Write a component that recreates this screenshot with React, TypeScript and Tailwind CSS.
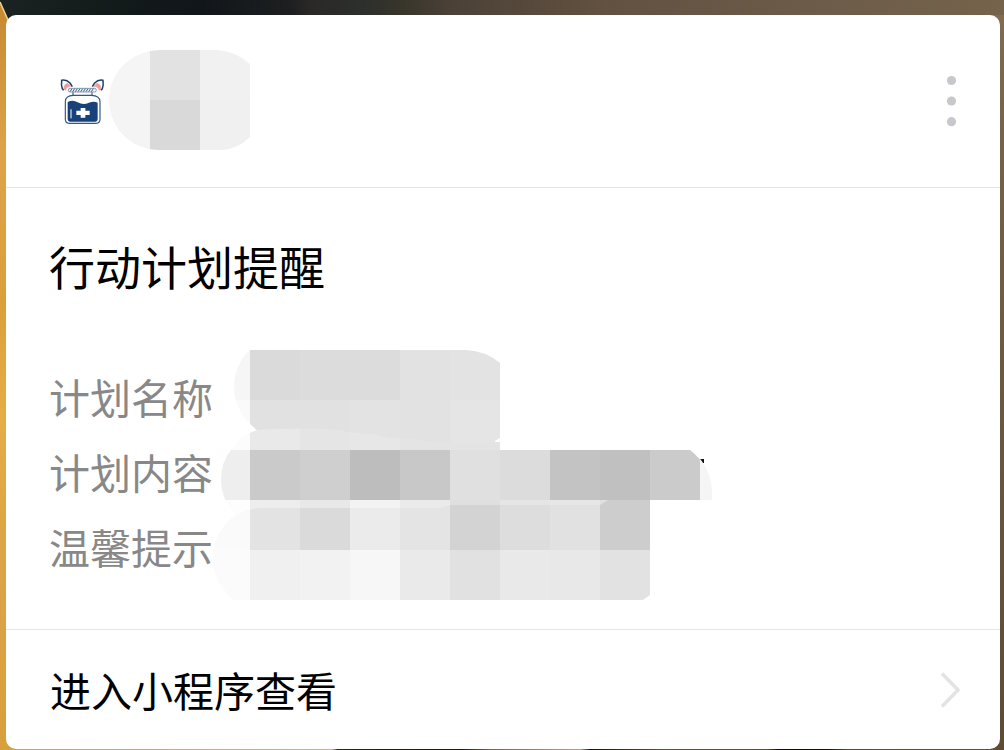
import React from "react";

type Tile = [x: number, y: number, width: number, height: number, fill: string];

const COLUMN = 50;

function tileRow(startX: number, y: number, height: number, fills: string[]): Tile[] {
  return fills.map((fill, i) => [startX + i * COLUMN, y, COLUMN, height, fill]);
}

function Tiles({ tiles, clip }: { tiles: Tile[]; clip: string }) {
  return (
    <g clipPath={`url(#${clip})`} shapeRendering="crispEdges">
      {tiles.map(([x, y, width, height, fill]) => (
        <rect key={`${x}-${y}`} x={x} y={y} width={width} height={height} fill={fill} />
      ))}
    </g>
  );
}

const nameTiles: Tile[] = [
  ...tileRow(200, 350, 50, ["#f6f6f6", "#dadada", "#dcdcdc", "#dcdcdc", "#e2e2e2", "#e3e3e3"]),
  ...tileRow(200, 400, 50, ["#fafafa", "#e1e1e1", "#e1e1e1", "#e3e3e3", "#e2e2e2", "#e5e5e5"]),
];

const contentTiles: Tile[] = [
  ...tileRow(200, 400, 50, ["#fcfcfc", "#e9e9e9", "#e5e5e5", "#e7e7e7", "#e4e4e4", "#e4e4e4"]),
  ...tileRow(200, 450, 50, [
    "#eeeeee", "#cacaca", "#cfcfcf", "#bdbdbd", "#c8c8c8", "#e0e0e0",
    "#dcdcdc", "#c3c3c3", "#c0c0c0", "#cbcbcb", "#f5f5f5",
  ]),
  ...tileRow(200, 500, 50, [
    "#fdfdfd", "#ededed", "#e8e8e8", "#f3f3f3", "#eaeaea", "#dfdfdf", "#e5e5e5", "#e6e6e6", "#e0e0e0",
  ]),
];

const tipTiles: Tile[] = [
  ...tileRow(200, 500, 50, [
    "#fafafa", "#e3e3e3", "#dadada", "#ebebeb", "#e4e4e4", "#d3d3d3", "#dddddd", "#e1e1e1", "#cdcdcd",
  ]),
  ...tileRow(200, 550, 50, [
    "#fbfbfb", "#f0f0f0", "#f2f2f2", "#f7f7f7", "#eaeaea", "#e1e1e1", "#e9e9e9", "#e8e8e8", "#e2e2e2",
  ]),
];

const nicknameTiles: Tile[] = [
  [100, 50, 50, 50, "#f5f5f5"],
  [150, 50, 50, 50, "#e2e2e2"],
  [200, 50, 50, 50, "#f1f1f1"],
  [100, 100, 50, 50, "#f4f4f4"],
  [150, 100, 50, 50, "#d9d9d9"],
  [200, 100, 50, 50, "#f0f0f0"],
];

function Backdrop() {
  return (
    <svg
      className="absolute inset-0 -z-10 h-full w-full"
      viewBox="0 0 1004 750"
      preserveAspectRatio="none"
      aria-hidden="true"
    >
      <defs>
        <linearGradient id="sky">
          <stop offset="0" stopColor="#1b2322" />
          <stop offset="0.1" stopColor="#131b1b" />
          <stop offset="0.2" stopColor="#11161a" />
          <stop offset="0.29" stopColor="#1d1f20" />
          <stop offset="0.31" stopColor="#2a2927" />
          <stop offset="0.36" stopColor="#2c2f2c" />
          <stop offset="0.4" stopColor="#38352b" />
          <stop offset="0.45" stopColor="#4b4137" />
          <stop offset="0.6" stopColor="#625140" />
          <stop offset="0.8" stopColor="#6c5b49" />
          <stop offset="1" stopColor="#75634b" />
        </linearGradient>
        <linearGradient id="gold" x1="0" y1="0" x2="0" y2="1">
          <stop offset="0" stopColor="#c58a31" />
          <stop offset="0.2" stopColor="#dda349" />
          <stop offset="0.4" stopColor="#d9a03a" />
          <stop offset="0.55" stopColor="#e4ad45" />
          <stop offset="0.75" stopColor="#dba445" />
          <stop offset="1" stopColor="#d89f3d" />
        </linearGradient>
        <linearGradient id="bark" x1="0" y1="0" x2="0" y2="1">
          <stop offset="0" stopColor="#806d50" />
          <stop offset="0.2" stopColor="#746147" />
          <stop offset="1" stopColor="#5e4b34" />
        </linearGradient>
        <linearGradient id="ground">
          <stop offset="0" stopColor="#d9a040" />
          <stop offset="0.33" stopColor="#cdb75c" />
          <stop offset="0.335" stopColor="#25251d" />
          <stop offset="0.46" stopColor="#20190f" />
          <stop offset="0.49" stopColor="#80653a" />
          <stop offset="0.58" stopColor="#b5a671" />
          <stop offset="0.59" stopColor="#18140c" />
          <stop offset="0.66" stopColor="#5b5132" />
          <stop offset="0.77" stopColor="#57502f" />
          <stop offset="0.78" stopColor="#0e0b07" />
          <stop offset="0.83" stopColor="#15100a" />
          <stop offset="0.85" stopColor="#5b4c37" />
          <stop offset="1" stopColor="#62503a" />
        </linearGradient>
      </defs>
      <rect width="1004" height="30" fill="url(#sky)" />
      <path d="M0 2L8 19L20 30V750H0Z" fill="url(#gold)" />
      <path d="M0 2L8 20" stroke="#ead3a0" strokeWidth="1.5" />
      <rect x="984" y="15" width="20" height="735" fill="url(#bark)" />
      <rect x="6" y="735" width="990" height="15" fill="url(#ground)" />
      <rect y="735" width="12" height="15" fill="#d89f3d" />
    </svg>
  );
}

function BottleLogo() {
  return (
    <svg className="h-[50px] w-12 shrink-0" viewBox="24 15 144 150" fill="none" role="img" aria-label="药瓶">
      <path d="M42 57Q41 43 53 40L62 49Q49 49 46 61Z" fill="#f19a9c" stroke="#f19a9c" strokeWidth="2" />
      <path d="M152 57Q153 43 141 40L132 49Q145 49 148 61Z" fill="#f19a9c" stroke="#f19a9c" strokeWidth="2" />
      <path d="M41 61L37 56Q33 45 35 31Q49 28 60 39L67 50" stroke="#1f3d68" strokeWidth="4.5" strokeLinejoin="round" />
      <path d="M153 61L157 56Q161 45 159 31Q145 28 134 39L127 50" stroke="#1f3d68" strokeWidth="4.5" strokeLinejoin="round" />
      <rect x="55" y="55" width="84" height="11" rx="5" fill="#eef3f8" stroke="#53719a" strokeWidth="2" />
      <path d="M60 65l6-9m2 9l6-9m2 9l6-9m2 9l6-9m2 9l6-9m2 9l6-9m2 9l6-9m2 9l6-9m2 9l6-9" stroke="#1f3d68" strokeWidth="2.5" />
      <path d="M69 67V75M126 67V75" stroke="#1f3d68" strokeWidth="3" />
      <path d="M70 76H124Q150 77 150 95V148Q150 160 138 160H58Q46 160 46 148V95Q46 77 70 76Z" fill="#fff" stroke="#315782" strokeWidth="3.5" />
      <path d="M53 96Q69 88 83 97Q100 106 117 98Q131 92 143 98V148Q143 155 136 155H60Q53 155 53 148Z" fill="#17427a" />
      <path d="M63 119V144" stroke="#fff" strokeWidth="3" strokeLinecap="round" />
      <path d="M92 114H106V122H119V135H106V143H92V135H79V122H92Z" fill="#fff" />
    </svg>
  );
}

function NicknameMosaic() {
  return (
    <svg className="h-[100px] w-[141px] shrink-0" viewBox="109 50 141 100" aria-hidden="true">
      <clipPath id="nickname">
        <path d="M160 50H216Q236 51 250 64V137Q238 149 222 150H158C130 149 109 127 109 100C109 73 130 51 160 50Z" />
      </clipPath>
      <Tiles tiles={nicknameTiles} clip="nickname" />
    </svg>
  );
}

function DetailsMosaic() {
  return (
    <svg className="absolute -top-[9px] left-[161px] h-[270px] w-[505px]" viewBox="210 350 505 270" aria-hidden="true">
      <defs>
        <clipPath id="plan-name">
          <path d="M250 350H466Q486 351 500 363V438L495 441V446H400L270 434L258 431Q234 412 234 388Q234 365 250 350Z" />
        </clipPath>
        <clipPath id="plan-content">
          <path d="M221 480Q221 462 231 450Q242 434 258 430Q305 427 340 430Q356 434 372 434L390 438L415 439L430 442H500V450H690Q712 467 712 493V500H612V515H236Q221 500 221 480Z" />
        </clipPath>
        <clipPath id="plan-tip">
          <path d="M213 560C213 532 230 510 260 508H440L450 505H600L608 500H650V595L643 600H234Q213 582 213 560Z" />
        </clipPath>
      </defs>
      <Tiles tiles={nameTiles} clip="plan-name" />
      <path d="M700 459H704V463L703 463L701 460Z" fill="#111" />
      <Tiles tiles={contentTiles} clip="plan-content" />
      <Tiles tiles={tipTiles} clip="plan-tip" />
    </svg>
  );
}

const labels = ["计划名称", "计划内容", "温馨提示"];

export default function App() {
  return (
    <div className="relative isolate min-h-screen pt-[15px] pr-1 pb-px pl-1.5 font-['Noto_Sans_CJK_SC','Noto_Sans',sans-serif]">
      <Backdrop />
      <article className="overflow-hidden rounded-[10px] bg-white text-black">
        <header className="flex items-center gap-[3px] border-b border-[#e4e4e4] pt-[35px] pr-[30px] pb-[37px] pl-[52px]">
          <BottleLogo />
          <NicknameMosaic />
          <button type="button" aria-label="更多" className="ml-auto flex h-16 w-9 items-center justify-center">
            <svg className="h-14 w-3" viewBox="0 0 12 56" fill="#c8c8cc" aria-hidden="true">
              <circle cx="5.5" cy="8.5" r="4.6" />
              <circle cx="5.5" cy="29" r="4.6" />
              <circle cx="5.5" cy="49.7" r="4.6" />
            </svg>
          </button>
        </header>

        <section className="px-[43px] pt-[47px] pb-[45px]">
          <h1 className="text-[46px] leading-[60px]">行动计划提醒</h1>
          <div className="relative mt-16">
            <ul className="text-[41px] leading-[75px] text-[#888888]">
              {labels.map((label) => (
                <li key={label}>{label}</li>
              ))}
            </ul>
            <DetailsMosaic />
          </div>
        </section>

        <a
          href="#plan"
          className="flex items-center justify-between border-t border-[#e4e4e4] py-[27px] pr-10 pl-11 text-[41px] leading-[65px]"
        >
          进入小程序查看
          <svg className="h-9 w-5" viewBox="0 0 20 36" fill="none" stroke="#e3e3e3" strokeWidth="3.4" aria-hidden="true">
            <path d="M2 1.5L18 18L2 34.5" />
          </svg>
        </a>
      </article>
    </div>
  );
}
